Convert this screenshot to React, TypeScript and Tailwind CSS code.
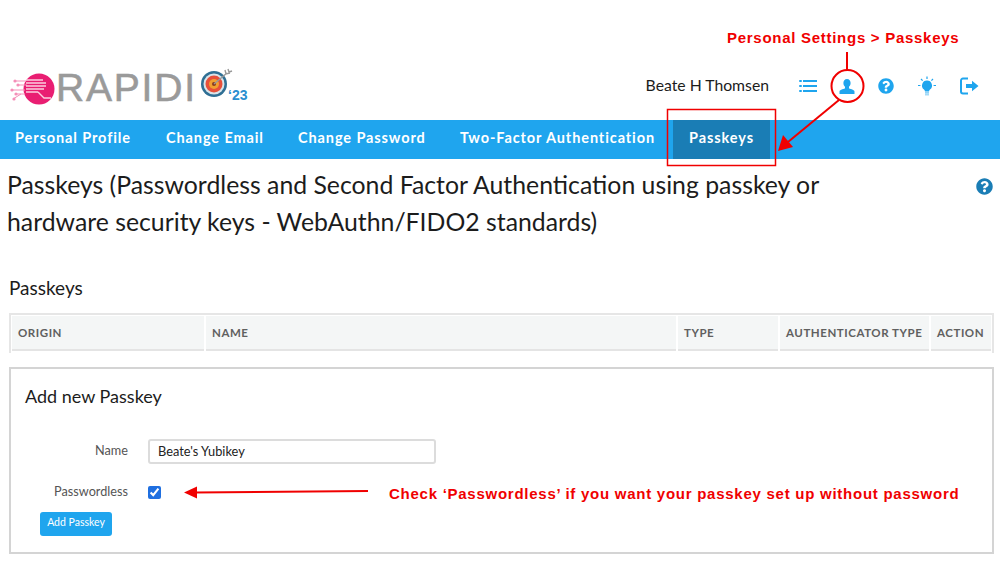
import React, { FC } from 'react';
import { FaQuestionCircle } from 'react-icons/fa';

const tabs = [
  { label: 'Personal Profile', width: 'w-[151px]' },
  { label: 'Change Email', width: 'w-[132px]' },
  { label: 'Change Password', width: 'w-[162px]' },
  { label: 'Two-Factor Authentication', width: 'w-[228px]' },
];

const columns = [
  { label: 'ORIGIN', width: 'w-[192px]' },
  { label: 'NAME', width: 'flex-1' },
  { label: 'TYPE', width: 'w-[100px]' },
  { label: 'AUTHENTICATOR TYPE', width: 'w-[149px]' },
  { label: 'ACTION', width: 'w-[60px]' },
];

const Logo: FC = () => (
  <div className="relative ml-[9px] h-[40px] w-[245px]">
    <svg width="46" height="36" viewBox="0 0 46 36" className="absolute left-0 top-[5px]">
      <circle cx="30" cy="18" r="15.5" fill="#e91e72" />
      <g stroke="#f48fb8" strokeWidth="1" fill="none">
        <path d="M5 10h12M8 14h10M2 19h14M6 23h10M4 28l8-5" />
      </g>
      <g fill="#f48fb8">
        <circle cx="6" cy="10" r="1.6" />
        <circle cx="9" cy="14" r="1.6" />
        <circle cx="3" cy="19" r="1.6" />
        <circle cx="7" cy="23" r="1.6" />
        <circle cx="5" cy="28" r="1.6" />
      </g>
      <path d="M17 9h17M17 12h20M17 15h20M17 18h18M17 21h12" stroke="#fbd0e0" strokeWidth="1.4" fill="none" />
      <path d="M29 21l6 6h7" stroke="#fbd0e0" strokeWidth="1.4" fill="none" />
    </svg>
    <span className="absolute left-[47px] top-[0px] text-[39px] leading-[44px] font-['Liberation_Sans',sans-serif] tracking-[1.8px] text-[#9a9a9a] [-webkit-text-stroke:0.6px_#9a9a9a]">
      RAPIDI
    </span>
    <svg width="36" height="34" viewBox="0 0 36 34" className="absolute left-[191px] top-[0px]">
      <circle cx="14" cy="18" r="13" fill="#2f6f94" />
      <circle cx="14" cy="18" r="10.5" fill="#d9e4ea" />
      <circle cx="14" cy="18" r="8.5" fill="#e8503a" />
      <circle cx="14" cy="18" r="5" fill="#f0a030" />
      <circle cx="14" cy="18" r="2" fill="#8a3a20" />
      <path d="M14 18 27 7M25 4l1 4 4-1M28 3l1 3 3-1" stroke="#999" strokeWidth="1.4" fill="none" />
    </svg>
    <span className="absolute left-[219px] top-[20px] text-[14px] leading-[18px] font-bold text-[#2a8fd0] font-['Liberation_Sans',sans-serif]">
      ‘23
    </span>
  </div>
);

const HeaderIcons: FC = () => (
  <div className="flex items-center text-[#1fa5ee]">
    <svg width="18" height="14" viewBox="0 0 18 14" fill="currentColor" className="mr-[22px]">
      <rect x="0" y="1" width="3" height="2" rx="1" />
      <rect x="0" y="6" width="3" height="2" rx="1" />
      <rect x="0" y="11" width="3" height="2" rx="1" />
      <rect x="4" y="1" width="14" height="2" />
      <rect x="4" y="6" width="14" height="2" />
      <rect x="4" y="11" width="14" height="2" />
    </svg>
    <svg width="16" height="15" viewBox="0 0 16 15" fill="currentColor" className="mr-[23px]">
      <path d="M8 0c2.300 0 3.600 1.700 3.600 4 0 1.600-.7 3-1.600 3.800v1.400c0 .6 5.500 1.300 5.500 3.300V15H.5v-2.500c0-2 5.500-2.700 5.500-3.300V7.800C5.100 7 4.400 5.600 4.400 4 4.400 1.700 5.700 0 8 0z" />
    </svg>
    <FaQuestionCircle size={16} className="mr-[24px]" />
    <svg width="18" height="21" viewBox="0 0 18 21" fill="currentColor" className="mr-[24px]">
      <path d="M9 4.500a5 5 0 0 0-3 9c.7.6 1 1.200 1 2h4c0-.8.3-1.400 1-2a5 5 0 0 0-3-9z" />
      <rect x="7" y="16.300" width="4" height="1.200" opacity="0.7" />
      <rect x="7" y="18.200" width="4" height="1.200" opacity="0.5" />
      <path d="M9 0.500v2.400M3 3l1.600 1.600M15 3l-1.600 1.600M0 9.500h2.400M15.600 9.500H18" stroke="currentColor" strokeWidth="1.200" />
    </svg>
    <svg width="19" height="18" viewBox="0 0 19 18" fill="currentColor" className="mr-[21px]">
      <path d="M8 1.500H3a2 2 0 0 0-2 2v11a2 2 0 0 0 2 2h5" fill="none" stroke="currentColor" strokeWidth="2" />
      <path d="M6 7h6V3.800L18.500 9 12 14.200V11H6z" />
    </svg>
  </div>
);

// annotation layer, sits over the page
const Annotations: FC = () => (
  <div className="absolute inset-0 pointer-events-none font-['Liberation_Sans',sans-serif] font-bold text-[#f00000]">
    <span className="absolute left-[727px] top-[29px] text-[15px] leading-[18px] tracking-[0.72px] whitespace-nowrap">
      Personal Settings &gt; Passkeys
    </span>
    <span className="absolute left-[389px] top-[485px] text-[15px] leading-[18px] tracking-[0.74px] whitespace-nowrap">
      Check ‘Passwordless’ if you want your passkey set up without password
    </span>
    <svg width="1000" height="561" className="absolute left-0 top-0" fill="none" stroke="#f00000">
      <path d="M847 52v18" strokeWidth="2" />
      <circle cx="847.500" cy="86" r="16" strokeWidth="2" />
      <path d="M839 100 788 142" strokeWidth="2" />
      <path d="M778 151 783 135 793 147z" fill="#f00000" stroke="none" />
      <rect x="667.500" y="109.500" width="108" height="56" strokeWidth="1.500" />
      <path d="M368 491 195 492.500" strokeWidth="2" />
      <path d="M184 492.500 197 486.500V498.500z" fill="#f00000" stroke="none" />
    </svg>
  </div>
);

const App: FC = () => (
  <div className="relative w-[1000px] h-[561px] overflow-hidden bg-white font-['Lato',sans-serif] text-[#1c1c1c]">
    <header className="h-[120px] flex items-end justify-between pb-[14px]">
      <Logo />
      <div className="flex items-center h-[40px]">
        <span className="text-[15.75px] mr-[30px] mb-[3px]">Beate H Thomsen</span>
        <HeaderIcons />
      </div>
    </header>

    <nav className="h-[39px] flex bg-[#1fa5ee] text-white text-[14.5px] font-bold tracking-[0.9px]">
      {tabs.map((t) => (
        <div key={t.label} className={`${t.width} flex items-center pl-[15px] pb-[3px]`}>
          {t.label}
        </div>
      ))}
      <div className="flex items-center justify-center w-[97px] pb-[3px] bg-[#1a7db5]">Passkeys</div>
    </nav>

    <main className="relative">
      <h1 className="pl-[7px] pr-[160px] pt-[7px] text-[24.8px] leading-[37px] font-normal">
        Passkeys (Passwordless and Second Factor Authentication using passkey or hardware security keys - WebAuthn/FIDO2 standards)
      </h1>
      <FaQuestionCircle size={17} className="absolute right-[7px] top-[19px] text-[#1a7db5]" />

      <h2 className="pl-[9px] mt-[35px] text-[19px] leading-[26px]">Passkeys</h2>

      <div className="ml-[9px] mr-[6px] mt-[12px] h-[40px] border-l-2 border-r-2 border-t-2 border-[#e6e6e6] pt-[1px] pl-[1px] pr-[1px]">
        <div className="flex gap-[2px] h-[35px]">
          {columns.map((c) => (
            <div
              key={c.label}
              className={`${c.width} flex items-center pl-[6px] bg-[#f4f6f6] border-b-2 border-[#e4e4e4] text-[11.5px] font-bold tracking-[0.55px] text-[#606060] whitespace-nowrap`}
            >
              {c.label}
            </div>
          ))}
        </div>
      </div>

      <section className="ml-[9px] mr-[6px] mt-[14px] h-[187px] border-2 border-[#d4d4d4] pl-[14px] pt-[14px]">
        <h3 className="text-[18px] leading-[26px]">Add new Passkey</h3>
        <div className="flex items-center mt-[30px] h-[25px]">
          <label className="w-[103px] pb-[2px] text-right text-[12.7px] text-[#555]">Name</label>
          <input
            readOnly
            value="Beate's Yubikey"
            className="ml-[20px] w-[288px] h-[25px] border-2 border-[#dcdcdc] rounded-[3px] px-[8px] pb-[2px] text-[12.8px] text-[#222]"
          />
        </div>
        <div className="flex items-center mt-[21px] h-[14px]">
          <label className="w-[103px] pb-[1px] text-right text-[12.7px] text-[#555]">Passwordless</label>
          <input type="checkbox" readOnly checked className="ml-[20px] w-[13px] h-[13px] accent-[#1f6fe0]" />
        </div>
        <button className="block ml-[15px] mt-[13px] w-[72px] h-[24px] pb-[2px] bg-[#1fa5ee] rounded-[3px] text-white text-[10.5px]">
          Add Passkey
        </button>
      </section>
    </main>

    <Annotations />
  </div>
);

export default App;
